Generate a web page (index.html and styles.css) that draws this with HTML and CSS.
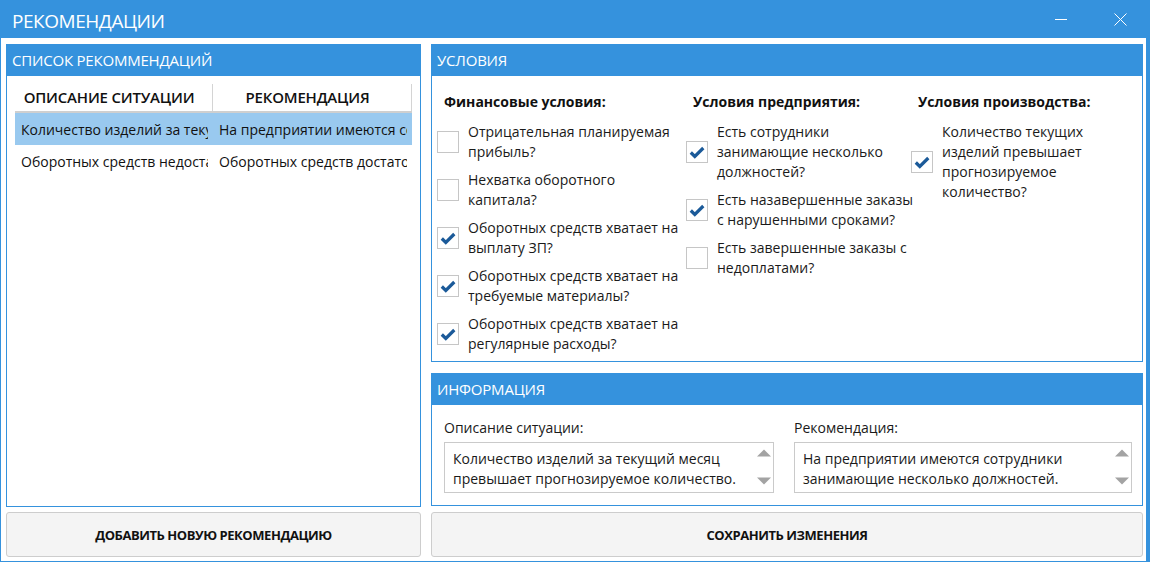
FILE: index.html
```html
<!DOCTYPE html>
<html lang="ru">
<head>
<meta charset="utf-8">
<title>Рекомендации</title>
<link rel="stylesheet" href="styles.css">
</head>
<body>
<div class="window">
  <header class="titlebar">
    <h1 class="title">РЕКОМЕНДАЦИИ</h1>
    <div class="controls">
      <span class="ctl"><svg width="12" height="12" viewBox="0 0 12 12"><path d="M0 6.5H12" stroke="#fff" stroke-width="1"/></svg></span>
      <span class="ctl"><svg width="13" height="13" viewBox="0 0 13 13"><path d="M0.5 0.5L12.5 12.5M12.5 0.5L0.5 12.5" stroke="#fff" stroke-width="1"/></svg></span>
    </div>
  </header>
  <main class="content">
    <section class="panel list-panel">
      <div class="panel-head">СПИСОК РЕКОММЕНДАЦИЙ</div>
      <div class="list-body">
        <div class="grid">
          <div class="grid-head">
            <div class="th">ОПИСАНИЕ СИТУАЦИИ</div>
            <div class="th">РЕКОМЕНДАЦИЯ</div>
          </div>
          <div class="row selected">
            <div class="td">Количество изделий за текущий месяц превышает прогнозируемое количество.</div>
            <div class="td">На предприятии имеются сотрудники занимающие несколько должностей.</div>
          </div>
          <div class="row">
            <div class="td">Оборотных средств недостаточно для выплаты ЗП.</div>
            <div class="td">Оборотных средств достаточно для выплаты ЗП.</div>
          </div>
        </div>
      </div>
    </section>

    <div class="right-col">
      <section class="panel cond-panel">
        <div class="panel-head">УСЛОВИЯ</div>
        <div class="cond-body">
          <div class="cond-col">
            <h2 class="cond-title">Финансовые условия:</h2>
            <label class="item"><span class="box"></span><span class="item-text">Отрицательная планируемая<br>прибыль?</span></label>
            <label class="item"><span class="box"></span><span class="item-text">Нехватка оборотного<br>капитала?</span></label>
            <label class="item"><span class="box checked"><svg width="22" height="22" viewBox="0 0 22 22"><path d="M4.8 11.5L8.8 15.5L17.3 7" fill="none" stroke="#1b5a99" stroke-width="3.2"/></svg></span><span class="item-text">Оборотных средств хватает на<br>выплату ЗП?</span></label>
            <label class="item"><span class="box checked"><svg width="22" height="22" viewBox="0 0 22 22"><path d="M4.8 11.5L8.8 15.5L17.3 7" fill="none" stroke="#1b5a99" stroke-width="3.2"/></svg></span><span class="item-text">Оборотных средств хватает на<br>требуемые материалы?</span></label>
            <label class="item"><span class="box checked"><svg width="22" height="22" viewBox="0 0 22 22"><path d="M4.8 11.5L8.8 15.5L17.3 7" fill="none" stroke="#1b5a99" stroke-width="3.2"/></svg></span><span class="item-text">Оборотных средств хватает на<br>регулярные расходы?</span></label>
          </div>
          <div class="cond-col">
            <h2 class="cond-title">Условия предприятия:</h2>
            <label class="item"><span class="box checked"><svg width="22" height="22" viewBox="0 0 22 22"><path d="M4.8 11.5L8.8 15.5L17.3 7" fill="none" stroke="#1b5a99" stroke-width="3.2"/></svg></span><span class="item-text">Есть сотрудники<br>занимающие несколько<br>должностей?</span></label>
            <label class="item"><span class="box checked"><svg width="22" height="22" viewBox="0 0 22 22"><path d="M4.8 11.5L8.8 15.5L17.3 7" fill="none" stroke="#1b5a99" stroke-width="3.2"/></svg></span><span class="item-text">Есть назавершенные заказы<br>с нарушенными сроками?</span></label>
            <label class="item"><span class="box"></span><span class="item-text">Есть завершенные заказы с<br>недоплатами?</span></label>
          </div>
          <div class="cond-col">
            <h2 class="cond-title">Условия производства:</h2>
            <label class="item"><span class="box checked"><svg width="22" height="22" viewBox="0 0 22 22"><path d="M4.8 11.5L8.8 15.5L17.3 7" fill="none" stroke="#1b5a99" stroke-width="3.2"/></svg></span><span class="item-text">Количество текущих<br>изделий превышает<br>прогнозируемое<br>количество?</span></label>
          </div>
        </div>
      </section>

      <section class="panel info-panel">
        <div class="panel-head">ИНФОРМАЦИЯ</div>
        <div class="info-body">
          <div class="field">
            <div class="field-label">Описание ситуации:</div>
            <div class="textbox">
              <div class="tb-text">Количество изделий за текущий месяц<br>превышает прогнозируемое количество.</div>
              <div class="tb-scroll">
                <svg width="14" height="8" viewBox="0 0 14 8"><path d="M0 7.5L7 0.5L14 7.5Z" fill="#a3a3a3"/></svg>
                <svg width="14" height="8" viewBox="0 0 14 8"><path d="M0 0.5L7 7.5L14 0.5Z" fill="#a3a3a3"/></svg>
              </div>
            </div>
          </div>
          <div class="field">
            <div class="field-label">Рекомендация:</div>
            <div class="textbox">
              <div class="tb-text">На предприятии имеются сотрудники<br>занимающие несколько должностей.</div>
              <div class="tb-scroll">
                <svg width="14" height="8" viewBox="0 0 14 8"><path d="M0 7.5L7 0.5L14 7.5Z" fill="#a3a3a3"/></svg>
                <svg width="14" height="8" viewBox="0 0 14 8"><path d="M0 0.5L7 7.5L14 0.5Z" fill="#a3a3a3"/></svg>
              </div>
            </div>
          </div>
        </div>
      </section>
    </div>

    <button class="btn">ДОБАВИТЬ НОВУЮ РЕКОМЕНДАЦИЮ</button>
    <button class="btn">СОХРАНИТЬ ИЗМЕНЕНИЯ</button>
  </main>
</div>
</body>
</html>
```

FILE: styles.css
```css
* { box-sizing: border-box; }

html, body {
  margin: 0;
  padding: 0;
  background: #ffffff;
}

body {
  font-family: "Open Sans", "Noto Sans", "DejaVu Sans", sans-serif;
  font-size: 14px;
  color: #1a1a1a;
}

.window {
  width: 1150px;
  height: 562px;
  border-left: 1px solid #3592dd;
  border-right: 4px solid #3592dd;
  border-bottom: 1px solid #3592dd;
  display: flex;
  flex-direction: column;
}

.titlebar {
  height: 38px;
  background: #3592dd;
  display: flex;
  align-items: center;
  justify-content: space-between;
  flex: none;
}

.title {
  margin: 0;
  padding: 4px 0 0 11px;
  font-size: 19px;
  font-weight: 400;
  color: #ffffff;
  letter-spacing: -0.45px;
}

.controls {
  display: flex;
  align-items: center;
  height: 100%;
  padding-right: 19px;
  gap: 46px;
}

.ctl {
  display: flex;
  width: 13px;
  height: 13px;
}

.content {
  flex: 1;
  display: grid;
  grid-template-columns: 415px 712px;
  grid-template-rows: 463px 45px;
  column-gap: 10px;
  row-gap: 5px;
  padding: 6px 2px 0 5px;
}

.right-col {
  display: flex;
  flex-direction: column;
  gap: 11px;
}

.panel {
  border: 1px solid #3592dd;
  background: #ffffff;
  display: flex;
  flex-direction: column;
}

.panel-head {
  height: 31px;
  line-height: 31px;
  background: #3592dd;
  color: #ffffff;
  font-size: 15px;
  padding-left: 5px;
  letter-spacing: -0.2px;
  flex: none;
}

/* List */
.list-body {
  padding: 8px 8px 0 8px;
}

.grid {
  width: 397px;
}

.grid-head {
  display: grid;
  grid-template-columns: 198px 199px;
  height: 29px;
  border-bottom: 2px solid #cfcfcf;
}

.th {
  font-size: 15px;
  font-weight: 600;
  text-align: center;
  line-height: 27px;
  color: #111;
  border-right: 1px solid #d4d4d4;
  letter-spacing: -0.2px;
  padding-right: 9px;
}

.row {
  display: grid;
  grid-template-columns: 198px 199px;
  height: 32px;
  align-items: center;
}

.row.selected {
  background: #99c9ef;
}

.td {
  white-space: nowrap;
  overflow: hidden;
  margin-right: 5px;
  padding-left: 6px;
  font-size: 14px;
  color: #111;
}

/* Conditions */
.cond-panel {
  height: 318px;
  flex: none;
}

.cond-body {
  display: grid;
  grid-template-columns: 249px 225px 1fr;
  padding: 16px 0 0 5px;
}

.cond-title {
  margin: 0 0 10px 0;
  padding-left: 7px;
  font-size: 14px;
  font-weight: 700;
  line-height: 20px;
  color: #111;
}

.item {
  display: flex;
  align-items: center;
  margin-bottom: 8px;
}

.box {
  width: 22px;
  height: 22px;
  border: 1px solid #c6c6c6;
  background: #fff;
  flex: none;
  margin-right: 9px;
  display: flex;
  align-items: center;
  justify-content: center;
}

.box svg {
  display: block;
  flex: none;
}

.item-text {
  line-height: 20px;
  color: #1a1a1a;
  white-space: nowrap;
}

/* Info */
.info-panel {
  height: 133px;
  flex: none;
}

.info-body {
  display: grid;
  grid-template-columns: 330px 338px;
  column-gap: 20px;
  padding: 13px 0 0 12px;
}

.field-label {
  line-height: 20px;
  margin-bottom: 4px;
}

.textbox {
  height: 51px;
  border: 1px solid #cacaca;
  display: flex;
}

.tb-text {
  flex: 1;
  padding: 6px 0 0 8px;
  line-height: 20px;
  white-space: nowrap;
  overflow: hidden;
}

.tb-scroll {
  display: flex;
  flex-direction: column;
  justify-content: space-between;
  padding: 6px 2px 7px 0;
}

.tb-scroll svg {
  display: block;
}

/* Buttons */
.btn {
  font-family: "Open Sans", "Noto Sans", sans-serif;
  font-size: 13px;
  font-weight: 700;
  color: #111;
  background: #f4f4f4;
  border: 1px solid #cdcdcd;
  border-radius: 3px;
  letter-spacing: -0.45px;
  padding: 0;
}
```
